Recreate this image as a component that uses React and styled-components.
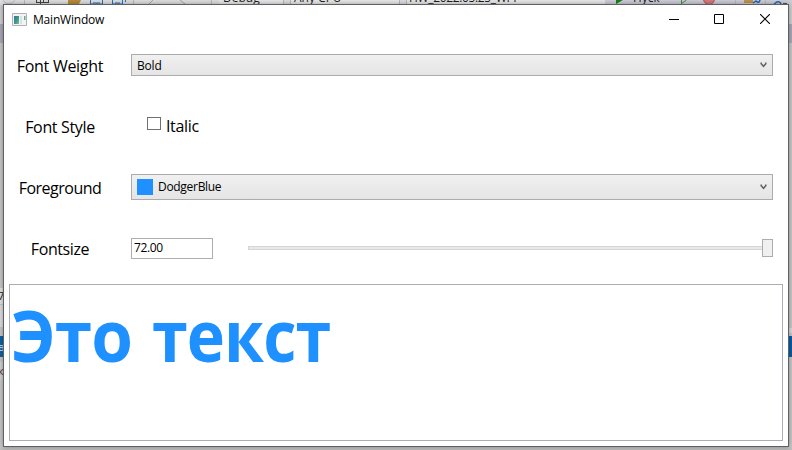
import React from "react";
import styled, { createGlobalStyle } from "styled-components";

const GlobalStyle = createGlobalStyle`
  * { box-sizing: border-box; }
  html, body { margin: 0; }
  body { width: 792px; height: 450px; overflow: hidden; font-family: "Open Sans", "Noto Sans", sans-serif; color: #000; }
`;

const Desktop = styled.div`
  position: relative;
  width: 792px;
  height: 450px;
  padding: 4px 3px 3px;
  overflow: hidden;
  background: linear-gradient(#cfcfd1 0 24px, #a9a9b9 24px 43px, #c9c8c8 43px 446px, #bcbcbc);
`;

const Toolbar = styled.div`
  position: absolute;
  left: 0;
  top: 0;
  width: 792px;
  height: 5px;
  background: linear-gradient(90deg, #dedede 0 605px, #cdcdd7 605px);
  overflow: hidden;

  svg { display: block; }
`;

const ToolbarText = styled.span`
  position: absolute;
  left: ${(p) => p.$x}px;
  top: -9px;
  font-size: 12px;
  line-height: 14px;
  letter-spacing: ${(p) => p.$spacing || 0}px;
  white-space: nowrap;
  color: #1e1e1e;
`;

const EdgeItem = styled.div`
  position: absolute;
  left: ${(p) => p.$x}px;
  top: ${(p) => p.$y}px;
  width: 4px;
  height: ${(p) => p.$h}px;
  overflow: hidden;
  background: ${(p) => p.$bg};
  color: ${(p) => p.$color || "#222"};
  font-size: 11px;
  line-height: ${(p) => p.$h}px;
  text-indent: -2px;
`;

const Window = styled.main`
  position: relative;
  display: flex;
  flex-direction: column;
  width: 786px;
  height: 443px;
  border: 1px solid #5f6063;
  background: #fff;
  box-shadow: 0 0 5px rgba(0, 0, 0, 0.35);
`;

const TitleBar = styled.header`
  display: flex;
  align-items: center;
  height: 30px;
  padding-left: 8px;

  > svg { margin-top: -2px; }
`;

const Title = styled.h1`
  margin: 0 auto 0 6px;
  font-size: 12px;
  font-weight: 400;
  line-height: 16px;
  letter-spacing: -0.2px;
`;

const CaptionButton = styled.button`
  display: flex;
  align-items: center;
  justify-content: center;
  width: ${(p) => p.$w || 46}px;
  height: 30px;
  padding: 0 ${(p) => p.$shift || 0}px 2px 0;
  border: 0;
  background: none;
`;

const Form = styled.section`
  display: grid;
  grid-template-columns: 112px 642px;
  grid-auto-rows: 61px;
  column-gap: 15px;
`;

const Label = styled.label`
  justify-self: center;
  padding-top: 20px;
  font-size: 16px;
  line-height: 22px;
  letter-spacing: ${(p) => p.$spacing || 0}px;
  white-space: nowrap;
`;

const ComboBox = styled.div`
  display: flex;
  align-items: center;
  height: ${(p) => p.$h}px;
  margin-top: ${(p) => p.$top}px;
  padding: 0 5px;
  border: 1px solid #acacac;
  background: linear-gradient(#f0f0f0, #e5e5e5);
  font-size: 12px;
  line-height: 16px;
`;

const ComboText = styled.span`
  margin-right: auto;
  padding: ${(p) => p.$top || 0}px 0 ${(p) => p.$bottom || 0}px;
  letter-spacing: ${(p) => p.$spacing}px;
`;

const Swatch = styled.span`
  width: 16px;
  height: 16px;
  margin-right: 5px;
  background: #1e90ff;
`;

const CheckField = styled.div`
  display: flex;
  align-items: flex-start;
  gap: 5px;
  padding: 19px 0 0 16px;
  font-size: 16px;
  line-height: 22px;
  letter-spacing: -0.35px;
`;

const CheckBox = styled.span`
  width: 14px;
  height: 13px;
  margin-top: 2px;
  border: 1px solid #707070;
  background: #fff;
`;

const SizeField = styled.div`
  display: flex;
  align-items: flex-start;
  gap: 35px;
  padding-top: 20px;
`;

const NumberBox = styled.div`
  width: 82px;
  height: 21px;
  padding: 0 2px;
  border: 1px solid #abadb3;
  font-size: 12px;
  line-height: 17px;
  letter-spacing: -0.4px;
`;

const Slider = styled.div`
  display: flex;
  align-items: center;
  width: 525px;
  height: 18px;
  margin-top: 1px;
`;

const Track = styled.div`
  flex: 1;
  height: 4px;
  border: 1px solid #d6d6d6;
  border-right: 0;
  background: #e7eaea;
`;

const Thumb = styled.div`
  width: 11px;
  height: 18px;
  border: 1px solid #acacac;
  background: #f0f0f0;
`;

const Preview = styled.div`
  width: 774px;
  height: 157px;
  margin: 5px 0 0 5px;
  border: 1px solid #abadb3;
  padding: 0 1px;
  color: #1e90ff;
  font-size: 71px;
  font-weight: 700;
  line-height: 99px;
  letter-spacing: -1px;
  white-space: nowrap;
`;

const PreviewWord = styled.span`
  display: inline-block;
  margin-left: ${(p) => p.$left || 0}px;
  transform: scaleX(${(p) => p.$scale});
  transform-origin: left;
`;

const Chevron = () => (
  <svg width="7" height="6" viewBox="0 0 7 6">
    <path d="M1.2 .5v1.2L3.5 4.3 5.8 1.7V.5" fill="none" stroke="#606060" strokeWidth="1.5" />
  </svg>
);

const ToolbarArt = () => (
  <svg width="792" height="5">
    <circle cx="9" cy="-2" r="6" fill="none" stroke="#bcbcbc" />
    <path d="M24.5 0v5M133.5 0v5M211.5 0v5M735.5 0v5M765.5 0v5" stroke="#b9b9be" />
    <path d="M36.5 0v3M40.5 0v5M43.5 0v3M48.5 0v3M36 2.5h13" stroke="#444" />
    <path d="M68 0h13l-2 4H68z" fill="#b98b38" />
    <path d="M90.5 0v4h12V0M112.5 0v4h10V0M93 3h7M115 3h5M125.5 0v2" fill="none" stroke="#2671bd" />
    <path d="M153 0l-5 5M180 0l5 4" stroke="#a4a4a4" />
    <path d="M219 0h64v5h-64zM290 0h109v5H290zM406 0h199v5H406z" fill="#e8e8e8" />
    <path d="M283.5 0v5M290.5 0v5M399.5 0v5M406.5 0v5" stroke="#b8b8c0" />
    <path d="M616 0h7l-7 4z" fill="#168016" />
    <path d="M681.5 0v3.5l5-3.5" fill="none" stroke="#3b8d3b" />
    <circle cx="709" cy="-1" r="5.5" fill="#d67b80" stroke="#bf4a50" />
    <path d="M744 0h9v3h-9z" fill="#bf9547" />
    <path d="M753 3l3-2q3 3 4-1M774 4l3-2q3-1 4 2" fill="none" stroke="#1f66b0" strokeWidth="1.5" />
    <path d="M783 3.5h4" stroke="#555" />
  </svg>
);

const WindowIcon = () => (
  <svg width="15" height="13" viewBox="0 0 15 13">
    <defs>
      <linearGradient id="pane" x2="1" y2="1">
        <stop stopColor="#3d70a8" />
        <stop offset=".55" stopColor="#3c9a80" />
        <stop offset="1" stopColor="#80bf9f" />
      </linearGradient>
    </defs>
    <path d="M.5.5h14v12H.5z" fill="#f2f3f5" stroke="#aeb2b8" />
    <path d="M2 3h5v8H2z" fill="url(#pane)" />
    <path d="M8 3h2v8H8z" fill="#d5e5dc" />
    <path d="M12 3h1.5v4H12z" fill="#69a994" />
  </svg>
);

export default function App() {
  return (
    <>
      <GlobalStyle />
      <Desktop>
        <Toolbar>
          <ToolbarArt />
          <ToolbarText $x={223}>Debug</ToolbarText>
          <ToolbarText $x={294}>Any CPU</ToolbarText>
          <ToolbarText $x={409} $spacing={-0.35}>HW_2022.05.25_WPF</ToolbarText>
          <ToolbarText $x={633}>Пуск</ToolbarText>
        </Toolbar>
        <EdgeItem $x={0} $y={288} $h={16} $bg="#e4e4e4">7</EdgeItem>
        <EdgeItem $x={0} $y={305} $h={22} $bg="#dedee1" />
        <EdgeItem $x={0} $y={336} $h={21} $bg="#0e61a9" $color="#d5e8f7">в</EdgeItem>
        <EdgeItem $x={0} $y={362} $h={18} $bg="#d2d2d2" $color="#5a1825">к</EdgeItem>
        <EdgeItem $x={788} $y={328} $h={5} $bg="#d9d9df" />
        <EdgeItem $x={788} $y={336} $h={21} $bg="#075ca8" />
        <Window>
          <TitleBar>
            <WindowIcon />
            <Title>MainWindow</Title>
            <CaptionButton aria-label="Minimize">
              <svg width="10" height="10"><path d="M0 5.5h10" stroke="#000" /></svg>
            </CaptionButton>
            <CaptionButton $w={45} $shift={1} aria-label="Maximize">
              <svg width="10" height="10"><path d="M.5.5h9v9h-9z" fill="none" stroke="#000" /></svg>
            </CaptionButton>
            <CaptionButton aria-label="Close">
              <svg width="10" height="10"><path d="M0 0l10 10M10 0L0 10" stroke="#000" strokeWidth="1.1" /></svg>
            </CaptionButton>
          </TitleBar>
          <Form>
            <Label $spacing={-0.28}>Font Weight</Label>
            <ComboBox $h={22} $top={19}>
              <ComboText $spacing={-0.2} $top={2}>Bold</ComboText>
              <Chevron />
            </ComboBox>
            <Label $spacing={-0.35}>Font Style</Label>
            <CheckField>
              <CheckBox />
              <span>Italic</span>
            </CheckField>
            <Label $spacing={-0.5}>Foreground</Label>
            <ComboBox $h={26} $top={17}>
              <Swatch />
              <ComboText $spacing={-0.3} $bottom={1}>DodgerBlue</ComboText>
              <Chevron />
            </ComboBox>
            <Label $spacing={-0.4}>Fontsize</Label>
            <SizeField>
              <NumberBox>72.00</NumberBox>
              <Slider>
                <Track />
                <Thumb />
              </Slider>
            </SizeField>
          </Form>
          <Preview>
            <PreviewWord $scale={0.95}>Это</PreviewWord>{" "}
            <PreviewWord $scale={0.91} $left={-4}>текст</PreviewWord>
          </Preview>
        </Window>
      </Desktop>
    </>
  );
}
